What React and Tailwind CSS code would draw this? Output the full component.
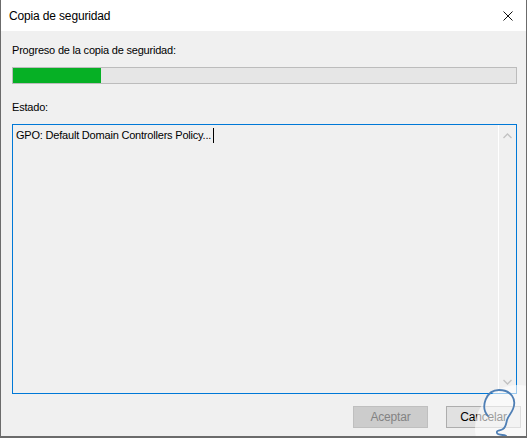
export default function App() {
  return (
    <div
      className="relative w-[527px] h-[438px] bg-[#f0f0f0] border-l border-r border-b-2 border-[#6b6b6b] overflow-hidden flex flex-col text-[11px] tracking-[-0.2px] text-black"
      style={{ fontFamily: '"Liberation Sans", Arial, sans-serif' }}
    >
      {/* Title bar */}
      <div className="h-[31px] bg-white flex items-center justify-between pl-[8px] pr-[12px] shrink-0">
        <span className="text-[12px] tracking-[-0.15px] text-black">Copia de seguridad</span>
        <svg width="10" height="10" viewBox="0 0 10 10" className="mr-[1px]">
          <path d="M0.5 0.5 L9.5 9.5 M9.5 0.5 L0.5 9.5" stroke="#111" strokeWidth="1" />
        </svg>
      </div>

      {/* Body */}
      <div className="flex flex-col flex-1 px-[11px]">
        <div className="mt-[12px] leading-[14px]">Progreso de la copia de seguridad:</div>

        <div className="mt-[10px] h-[17px] w-[505px] border border-[#bcbcbc] bg-[#e6e6e6]">
          <div className="h-full w-[88px] bg-[#06b025]" />
        </div>

        <div className="mt-[16px] leading-[14px]">Estado:</div>

        <div className="mt-[10px] h-[270px] w-[505px] border border-[#0078d7] flex">
          <div className="flex-1 pl-[3px] pt-[3px] leading-[14px] flex items-start">
            <span>GPO: Default Domain Controllers Policy...</span>
            <span className="inline-block w-[1px] h-[15px] bg-black ml-[2px]" />
          </div>
          <div className="w-[18px] border-l border-white flex flex-col items-center justify-between py-[8px]">
            <svg width="9" height="6" viewBox="0 0 9 6">
              <path d="M0.5 5 L4.5 1 L8.5 5" stroke="#c2c2c2" strokeWidth="1.3" fill="none" />
            </svg>
            <svg width="9" height="6" viewBox="0 0 9 6">
              <path d="M0.5 1 L4.5 5 L8.5 1" stroke="#c2c2c2" strokeWidth="1.3" fill="none" />
            </svg>
          </div>
        </div>

        <div className="mt-[12px] flex justify-end gap-[18px] mr-[-6px]">
          <button className="w-[75px] h-[22px] bg-[#cccccc] border border-[#bfbfbf] text-[#838383] text-[12px] tracking-[-0.2px]">
            Aceptar
          </button>
          <button className="w-[75px] h-[22px] bg-[#e1e1e1] border border-[#adadad] text-black text-[12px] tracking-[-0.2px]">
            Cancelar
          </button>
        </div>
      </div>

      {/* Watermark logo */}
      <svg
        className="absolute left-[474px] top-[385px]"
        width="86"
        height="86"
        viewBox="0 0 86 86"
      >
        <circle cx="43" cy="43" r="43" fill="white" fillOpacity="0.6" />
        <path
          d="M13 31 C5 22 11 5 24 5 C36 5 42 14 38 24 C36 29 33 31 32 35 C31 39 31 42 28 44 C25 46 21 45 22 48 C23 51 33 49 31 52 C29 55 20 54 16 54"
          stroke="#4f7fb5"
          strokeWidth="1.8"
          fill="none"
          strokeLinecap="round"
          strokeLinejoin="round"
        />
      </svg>
    </div>
  );
}
